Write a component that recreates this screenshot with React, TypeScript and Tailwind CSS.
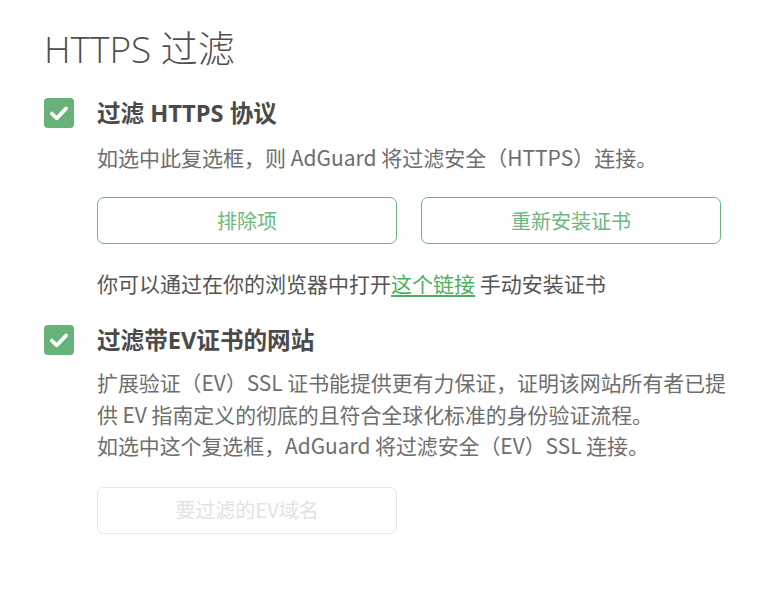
const bodyFont = { fontFamily: '"Noto Sans CJK SC", "Open Sans", sans-serif' };

const CheckBox = () => (
  <div className="w-[30px] h-[30px] rounded-[4px] bg-[#67b279] flex items-center justify-center shrink-0">
    <svg width="22" height="22" viewBox="0 0 20 20" fill="none">
      <path d="M3.5 10.5 L8 14.8 L16.5 5.8" stroke="white" strokeWidth="3.4" strokeLinecap="round" strokeLinejoin="round" />
    </svg>
  </div>
);

const Heading = ({ children }: { children: React.ReactNode }) => (
  <div className="flex items-center gap-[23px]">
    <CheckBox />
    <h2 className="text-[23.6px] font-bold text-[#4a4a4a] leading-[30px] font-['Open_Sans','Noto_Sans_CJK_SC',sans-serif]">
      {children}
    </h2>
  </div>
);

const App = () => {
  return (
    <div className="w-[772px] h-[595px] bg-white pl-[44px] pt-[27px]">
      <h1 className="text-[37px] font-light text-[#4f4f4f] leading-[44px] font-['Open_Sans','Noto_Sans_CJK_SC',sans-serif]">
        HTTPS 过滤
      </h1>

      <div className="mt-[27px]">
        <Heading>过滤 HTTPS 协议</Heading>
        <div className="ml-[53px]" style={bodyFont}>
          <p className="mt-[13px] text-[21px] leading-[32px] text-[#6e6e6e]">
            如选中此复选框，则 AdGuard 将过滤安全（HTTPS）连接。
          </p>
          <div className="mt-[24px] flex gap-[24px]">
            <button className="w-[300px] h-[47px] rounded-[7px] border border-[#6cb77f] text-[#6cb77f] text-[20px]">
              排除项
            </button>
            <button className="w-[300px] h-[47px] rounded-[7px] border border-[#6cb77f] text-[#6cb77f] text-[20px]">
              重新安装证书
            </button>
          </div>
          <p className="mt-[23px] text-[21px] leading-[32px] text-[#555555]">
            你可以通过在你的浏览器中打开<a className="text-[#4caf5c] underline underline-offset-[3px]">这个链接</a> 手动安装证书
          </p>
        </div>
      </div>

      <div className="mt-[26px]">
        <Heading>过滤带EV证书的网站</Heading>
        <div className="ml-[53px]" style={bodyFont}>
          <p className="mt-[12px] text-[20.9px] leading-[31.5px] text-[#6e6e6e]">
            扩展验证（EV）SSL 证书能提供更有力保证，证明该网站所有者已提<br />
            供 EV 指南定义的彻底的且符合全球化标准的身份验证流程。<br />
            如选中这个复选框，AdGuard 将过滤安全（EV）SSL 连接。
          </p>
          <button className="mt-[25px] w-[300px] h-[47px] rounded-[7px] border border-[#e6e6e6] text-[#e2e2e2] text-[20px]">
            要过滤的EV域名
          </button>
        </div>
      </div>
    </div>
  );
};

export default App;
